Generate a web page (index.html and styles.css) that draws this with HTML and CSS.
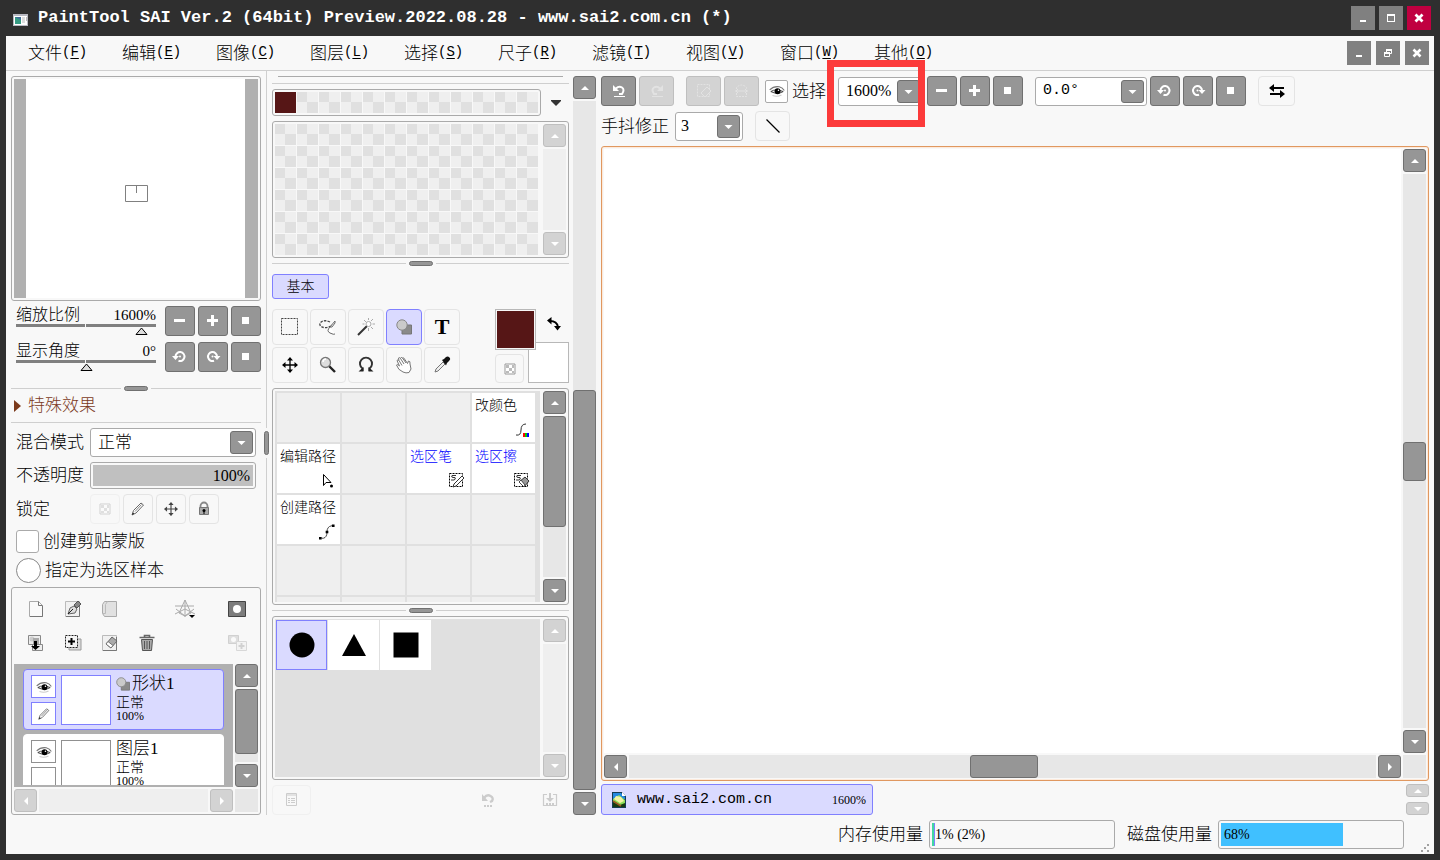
FILE: index.html
```html
<!DOCTYPE html>
<html lang="zh-CN">
<head>
<meta charset="utf-8">
<title>PaintTool SAI Ver.2</title>
<link rel="stylesheet" href="styles.css">
</head>
<body>
<svg class="defs" aria-hidden="true">
  <symbol id="minus" viewBox="0 0 16 16"><path d="M2 6h11v3H2z" fill="#fff"/></symbol>
  <symbol id="plus" viewBox="0 0 16 16"><path d="M2 6h4V2h3v4h4v3H9v4H6V9H2z" fill="#fff"/></symbol>
  <symbol id="stop" viewBox="0 0 16 16"><path d="M4 4h7v7H4z" fill="#fff"/></symbol>
  <symbol id="ccw" viewBox="0 0 16 16"><path d="M3.500 8.500V7.500a4.500 4.500 0 1 1 3 4.300" fill="none" stroke="#fff" stroke-width="2"/><path d="M0 7h7l-3.500 4z" fill="#fff"/><circle cx="8" cy="7.500" r="1" fill="#fff"/></symbol>
  <symbol id="cw" viewBox="0 0 16 16"><path d="M12 8.500V7.500a4.500 4.500 0 1 0-3 4.300" fill="none" stroke="#fff" stroke-width="2"/><path d="M15.500 7h-7L12 11z" fill="#fff"/><circle cx="7.500" cy="7.500" r="1" fill="#fff"/></symbol>
  <symbol id="up" viewBox="0 0 8 4"><path d="M4 0l4 4H0z" fill="#fff"/></symbol>
  <symbol id="down" viewBox="0 0 8 4"><path d="M4 4l4-4H0z" fill="#fff"/></symbol>
  <symbol id="left" viewBox="0 0 4 8"><path d="M0 4l4-4v8z" fill="#fff"/></symbol>
  <symbol id="right" viewBox="0 0 4 8"><path d="M4 4L0 0v8z" fill="#fff"/></symbol>
  <symbol id="eye" viewBox="0 0 16 16"><path d="M1.500 7Q5 3.500 10 4.200 13 5 14.500 7.500" fill="none" stroke="#777"/><path d="M2.500 8.500Q7 5.500 13.500 8.500 8.500 11.500 2.500 8.500z" fill="#eee" stroke="#333" stroke-width=".8"/><circle cx="8.500" cy="8.200" r="2.600" fill="#000"/><circle cx="9.300" cy="7.300" r=".7" fill="#fff"/><path d="M4 12q4 1.500 8-.5" fill="none" stroke="#ccc"/></symbol>
  <symbol id="pencil" viewBox="0 0 16 16"><path d="M2 14l1.500-4.500L11 2l2.500 2L6 12z" fill="#fff" stroke="#666"/><path d="M5 10.500l6.500-7" stroke="#888"/><path d="M2 14l1-2.500 1.300 1.300z" fill="#222"/></symbol>
  <symbol id="move" viewBox="0 0 16 16"><path d="M8 1v14M1 8h14" stroke="currentColor" stroke-width="1.300"/><path d="M8 0l3 3.500H5zM8 16l3-3.500H5zM0 8l3.500-3v6zM16 8l-3.500-3v6z" fill="currentColor"/></symbol>
  <symbol id="checks" viewBox="0 0 16 16"><path d="M3 3h10v10H3z" fill="#fff" stroke="#999"/><path d="M4 4h3v3H4zM10 4h2v3h-2zM7 7h3v3H7zM4 10h3v2H4zM10 10h2v2h-2z" fill="#bbb"/></symbol>
  <symbol id="shapes" viewBox="0 0 16 16"><path d="M6 6h9.500v9H6z" fill="#8a8a8a" stroke="#777"/><circle cx="6" cy="6" r="5.200" fill="#cacaca" stroke="#888"/></symbol>
  <symbol id="page" viewBox="0 0 18 18"><path d="M2.500 1.500h9l4 4v11h-13z" fill="#fafafa" stroke="#aaa"/><path d="M11.500 1.500v4h4M15.500 6v10.500H3" fill="none" stroke="#777"/></symbol>
  <symbol id="pagesq" viewBox="0 0 18 18"><path d="M1.500 1.500h14v15h-14z" fill="#f1f1f1" stroke="#bbb"/><path d="M15.500 3v13.500H2" fill="none" stroke="#777"/></symbol>
</svg>
<div class="app">
  <header class="titlebar">
    <svg class="logo" viewBox="0 0 15 13"><path d="M0 0h15v12H0z" fill="#b9b9c2"/><path d="M1 2h13v9H1z" fill="#fff"/><path d="M2 3h6v7H2z" fill="#369b83"/><path d="M2 3h6v3z" fill="#416c9a"/><path d="M9 4h3M9 6h3M9 8h3M13.500 3v4" stroke="#bbb"/></svg>
    <h1>PaintTool SAI Ver.2 (64bit) Preview.2022.08.28 - www.sai2.com.cn (*)</h1>
    <div class="winbtns">
      <button aria-label="最小化"><svg viewBox="0 0 24 24"><path d="M9 14h6v2H9z" fill="#fff"/></svg></button>
      <button aria-label="最大化"><svg viewBox="0 0 24 24"><path d="M8 8h8v8H8zM9 10v5h6v-5z" fill="#fff" fill-rule="evenodd"/></svg></button>
      <button class="close" aria-label="关闭"><svg viewBox="0 0 24 24"><path d="M8.500 8.500l7 7M15.500 8.500l-7 7" stroke="#fff" stroke-width="2.800"/></svg></button>
    </div>
  </header>
  <div class="window">
    <nav class="menubar">
      <button>文件<span>(<u>F</u>)</span></button>
      <button>编辑<span>(<u>E</u>)</span></button>
      <button>图像<span>(<u>C</u>)</span></button>
      <button>图层<span>(<u>L</u>)</span></button>
      <button>选择<span>(<u>S</u>)</span></button>
      <button>尺子<span>(<u>R</u>)</span></button>
      <button>滤镜<span>(<u>T</u>)</span></button>
      <button>视图<span>(<u>V</u>)</span></button>
      <button>窗口<span>(<u>W</u>)</span></button>
      <button>其他<span>(<u>O</u>)</span></button>
      <div class="winbtns doc">
        <button aria-label="最小化文档"><svg viewBox="0 0 24 24"><path d="M9 14h6v2H9z" fill="#fff"/></svg></button>
        <button aria-label="还原文档"><svg viewBox="0 0 24 24"><path d="M10.500 11V8.500h5v4H13M8.500 11.500h5v4h-5z" fill="none" stroke="#fff"/><path d="M10 8h6v2h-6zM8 11h6v2H8z" fill="#fff"/></svg></button>
        <button aria-label="关闭文档"><svg viewBox="0 0 24 24"><path d="M8.500 8.500l7 7M15.500 8.500l-7 7" stroke="#fff" stroke-width="2.600"/></svg></button>
      </div>
    </nav>
    <main class="work">
      <aside class="left">
        <div class="navigator box"><div class="paper"><svg viewBox="0 0 23 17"><path d="M.5.5h22v16H.5zM11.500 0v8" fill="none" stroke="#808080"/></svg></div></div>
        <div class="navrow">
          <div class="slide"><label for="zoom">缩放比例</label><output>1600%</output><input id="zoom" type="range" value="94"></div>
          <button class="dark sq" aria-label="缩小"><svg class="i16"><use href="#minus"/></svg></button>
          <button class="dark sq" aria-label="放大"><svg class="i16"><use href="#plus"/></svg></button>
          <button class="dark sq" aria-label="重置缩放"><svg class="i16"><use href="#stop"/></svg></button>
        </div>
        <div class="navrow">
          <div class="slide"><label for="angle">显示角度</label><output>0°</output><input id="angle" type="range" value="50"></div>
          <button class="dark sq" aria-label="逆时针旋转"><svg class="i16"><use href="#ccw"/></svg></button>
          <button class="dark sq" aria-label="顺时针旋转"><svg class="i16"><use href="#cw"/></svg></button>
          <button class="dark sq" aria-label="重置角度"><svg class="i16"><use href="#stop"/></svg></button>
        </div>
        <div class="splitter"><i></i></div>
        <button class="effects"><svg viewBox="0 0 7 12"><path d="M0 0l7 6-7 6z" fill="#7b3a1c"/></svg><span>特殊效果</span></button>
        <div class="props">
          <label for="mode">混合模式</label>
          <select id="mode" class="combo"><option>正常</option></select>
          <label for="opacity">不透明度</label>
          <div class="opacity box"><input id="opacity" type="range" value="100"><output>100%</output></div>
          <span class="label">锁定</span>
          <div class="locks">
            <button class="light sq faded" aria-label="锁定透明"><svg class="i16"><use href="#checks"/></svg></button>
            <button class="light sq" aria-label="锁定绘画"><svg class="i16"><use href="#pencil"/></svg></button>
            <button class="light sq grey" aria-label="锁定移动"><svg class="i14"><use href="#move"/></svg></button>
            <button class="light sq" aria-label="锁定全部"><svg class="i16" viewBox="0 0 16 16"><path d="M4.500 7V5a3.500 3.500 0 0 1 7 0v2" fill="none" stroke="#888" stroke-width="1.800"/><path d="M3.500 6.500h9v7h-9z" fill="#aaa" stroke="#777"/><circle cx="8" cy="9.500" r="1.500"/><path d="M7.500 10h1v3h-1z"/></svg></button>
          </div>
        </div>
        <label class="opt"><input type="checkbox"><span>创建剪贴蒙版</span></label>
        <label class="opt round"><input type="radio"><span>指定为选区样本</span></label>
        <section class="layers box">
          <div class="ltools">
            <button aria-label="新建图层"><svg class="i18"><use href="#page"/></svg></button>
            <button aria-label="新建钢笔图层"><svg class="i18" viewBox="0 0 18 18"><use href="#pagesq" width="18" height="18"/><path d="M4 14l2-6 4-2 3 3-2 4z" fill="#ddd" stroke="#666"/><path d="M4 14l5-5" stroke="#222"/><path d="M10 5l4-4 3 3-4 4z" fill="#888" stroke="#555"/></svg></button>
            <button aria-label="新建图层组"><svg class="i18" viewBox="0 0 18 18"><path d="M1.500 4.500l2-3h12v15h-12l-2-3z" fill="#e1e1e1" stroke="#aaa"/><path d="M1.500 13.500h3v-9l2-3" fill="none" stroke="#bbb"/></svg></button>
            <button class="ruler" aria-label="透视尺"><svg class="i20" viewBox="0 0 20 20"><path d="M10 1v17M0 7h19M0 15l10-5 10 5M10 1L4 14l6 3 6-3zM1 10l9 7 9-7" fill="none" stroke="#aaa"/><path d="M14 16h6l-3 3z"/></svg></button>
            <button aria-label="图层蒙版"><svg class="i18" viewBox="0 0 18 18"><path d="M.5 1.500h17v15H.5z" fill="#7d7d7d" stroke="#444"/><circle cx="9" cy="9" r="4" fill="#fff"/></svg></button>
            <button aria-label="向下合并"><svg class="i18" viewBox="0 0 18 18"><path d="M1.500 1.500h12v9h-12zM5.500 10.500h10v6h-10z" fill="#eee" stroke="#888"/><circle cx="5" cy="5" r="2.500" fill="#ccc"/><path d="M6 4h6v6H6z" fill="#aaa"/><path d="M7 7h3v5h3l-4.500 4L4 12h3z"/></svg></button>
            <button aria-label="复制图层"><svg class="i18" viewBox="0 0 18 18"><path d="M5 5h12v11H5z" fill="#ddd" stroke="#999"/><path d="M1.500 1.500h12v12h-12z" fill="#f4f4f4" stroke="#222" stroke-dasharray="2 1"/><path d="M4 6.500h2.500V4h2v2.500H11v2H8.500V11h-2V8.500H4z"/></svg></button>
            <button aria-label="清除图层"><svg class="i18" viewBox="0 0 18 18"><use href="#pagesq" width="18" height="18"/><path d="M5 10l6-7 5 4-6 7z" fill="#aaa" stroke="#666"/><path d="M5 10l2-2.500 5 4-2 2.500z" fill="#fff" stroke="#777"/></svg></button>
            <button aria-label="删除图层"><svg class="i18" viewBox="0 0 18 18"><path d="M3.500 5.500h11l-1 11h-9z" fill="#aaa" stroke="#555"/><path d="M6.500 7v8M9 7v8M11.500 7v8" stroke="#555"/><path d="M1.500 3.500h15M6.500 3V1.500h5V3" fill="none" stroke="#666" stroke-width="1.600"/></svg></button>
            <button class="faded" aria-label="合并蒙版"><svg class="i20" viewBox="0 0 20 20"><path d="M1.500 2.500h10v8h-10z" fill="#bbb" stroke="#999"/><circle cx="6.500" cy="6.500" r="2.500" fill="#fff"/><path d="M9.500 8.500h10v9h-10z" fill="#eee" stroke="#aaa"/><path d="M14.500 10v6M11.500 13h6" stroke="#999" stroke-width="2"/></svg></button>
          </div>
          <div class="lgrid">
            <div class="llist">
              <article class="layer on">
                <div class="lb"><button aria-label="显示形状1"><svg class="i18"><use href="#eye"/></svg></button><button aria-label="编辑形状1"><svg class="i14"><use href="#pencil"/></svg></button></div>
                <div class="thumb"></div>
                <div class="meta"><b><svg class="i14"><use href="#shapes"/></svg>形状1</b><span>正常</span><small>100%</small></div>
              </article>
              <article class="layer">
                <div class="lb"><button aria-label="显示图层1"><svg class="i18"><use href="#eye"/></svg></button><button aria-label="编辑图层1"></button></div>
                <div class="thumb"></div>
                <div class="meta"><b>图层1</b><span>正常</span><small>100%</small></div>
              </article>
            </div>
            <div class="vs"><button class="dark" aria-label="向上"><svg class="av"><use href="#up"/></svg></button><div class="track"><i style="flex-grow:65"></i><s style="flex-grow:8"></s></div><button class="dark" aria-label="向下"><svg class="av"><use href="#down"/></svg></button></div>
            <div class="hs off"><button class="dark" aria-label="向左"><svg class="ah"><use href="#left"/></svg></button><div class="track"></div><button class="dark" aria-label="向右"><svg class="ah"><use href="#right"/></svg></button></div>
            <div class="corner"></div>
          </div>
        </section>
      </aside>
      <div class="vsplit"><i></i></div>
      <section class="mid">
        <div class="cutbox"></div>
        <div class="colorrow"><div class="box hist"><div class="checker"><i></i></div></div><button class="tri" aria-label="颜色历史"><svg viewBox="0 0 10 6"><path d="M0 0h10v1L5 6 0 1z" fill="#333"/></svg></button></div>
        <div class="box swatches"><div class="checker"></div>
          <div class="vs off"><button class="dark" aria-label="向上"><svg class="av"><use href="#up"/></svg></button><div class="track"></div><button class="dark" aria-label="向下"><svg class="av"><use href="#down"/></svg></button></div>
        </div>
        <div class="splitter"><i></i></div>
        <button class="basic">基本</button>
        <div class="toolrow">
          <div class="tools">
            <button class="light" aria-label="选框"><svg class="i20" viewBox="0 0 20 20"><path d="M1.500 1.500h16v16h-16z" fill="none" stroke="#444" stroke-dasharray="2 1"/></svg></button>
            <button class="light" aria-label="套索"><svg class="i20" viewBox="0 0 20 20"><path d="M12 5C6 2 1 5 2 8s8 4 12 0" fill="none" stroke="#444" stroke-dasharray="2.500 1.200" stroke-width="1.300"/><path d="M17 4l-5 6h2l3-4zM12 10q-4 4 0 6t5 1" fill="#fff" stroke="#666"/></svg></button>
            <button class="light" aria-label="魔棒"><svg class="i20" viewBox="0 0 20 20"><path d="M2 18L11 9" stroke="#333" stroke-width="2"/><circle cx="12.500" cy="7" r="2.500" fill="#fff" stroke="#aaa"/><path d="M12.500 1v2M12.500 11v3M6.500 7h2M16.500 7H19M8 3l2 2M15 4l2-2M15 10l2 2" stroke="#aaa"/></svg></button>
            <button class="light on" aria-label="形状"><svg class="i16"><use href="#shapes"/></svg></button>
            <button class="light type" aria-label="文字">T</button>
            <button class="light" aria-label="移动"><svg class="i16"><use href="#move"/></svg></button>
            <button class="light" aria-label="缩放"><svg class="i20" viewBox="0 0 20 20"><path d="M10 10l7 7" stroke="#222" stroke-width="2.400"/><circle cx="7.500" cy="7.500" r="5" fill="#ddd" stroke="#777" stroke-width="1.300"/><path d="M5 7a3 3 0 0 1 3-3" fill="none" stroke="#fff" stroke-width="1.500"/></svg></button>
            <button class="light" aria-label="旋转"><svg class="i20" viewBox="0 0 20 20"><path d="M6.500 16v-2.500a6 6 0 1 1 7 0V16" fill="none" stroke="#333" stroke-width="1.900"/><path d="M2.500 16.500h5V12zM17.500 16.500h-5V12z" fill="#222"/></svg></button>
            <button class="light" aria-label="抓手"><svg class="i20" viewBox="0 0 20 20"><path d="M9 17Q4 15 2.500 10q1-1.500 3 1L3 5.500q1-1.500 2 0L4.500 3q1.500-1 2 .5Q7 1.500 8.500 3q1-1 2 1l3 4.500 1-2.500q2 0 1.500 3l1 5-2 3.500q-3 1-6-.5z" fill="#fff" stroke="#777"/><path d="M5 5.500l3 5M6.500 3.500L10 9M8.500 3L12 8" stroke="#777"/></svg></button>
            <button class="light" aria-label="吸管"><svg class="i20" viewBox="0 0 20 20"><path d="M3 17l1-3 7-7 2 2-7 7z" fill="#eee" stroke="#777"/><path d="M10 5l2-1 2-2q2-1 3.500.5T17 6l-2 2-1 2.500z" fill="#111"/></svg></button>
          </div>
          <div class="colors">
            <button class="c2" aria-label="背景色"></button>
            <button class="c1" aria-label="前景色"></button>
            <button class="swap" aria-label="交换颜色"><svg viewBox="0 0 14 14"><path d="M3 4q7 0 8 6" fill="none" stroke="#000" stroke-width="1.800"/><path d="M0 3.500L4.500 0v7.500zM7 9h7l-3.500 4.500z"/></svg></button>
            <button class="light ctrans" aria-label="透明色"><svg class="i16"><use href="#checks"/></svg></button>
          </div>
        </div>
        <div class="box brushes">
          <div class="bgrid">
            <div></div><div></div><div></div>
            <button>改颜色<svg viewBox="0 0 16 16"><path d="M2 13q5 1 5-5t5-6" fill="none" stroke="#333"/><path d="M9 11h2v4H9z" fill="red"/><path d="M11 11h2v4h-2z" fill="#0c0"/><path d="M13 11h2v4h-2z" fill="#00f"/></svg></button>
            <button>编辑路径<svg viewBox="0 0 16 16"><path d="M4.500 1.500v11l2.500-3h5z" fill="#fff" stroke="#000"/><circle cx="12.500" cy="13" r="1.500"/></svg></button>
            <div></div>
            <button class="sel">选区笔<svg viewBox="0 0 16 16"><path d="M.5.5h13v13H.5z" fill="none" stroke="#000" stroke-dasharray="2 1"/><path d="M7 2.500H3q-1 2 1 2h2q1 2-1 2.500H2" fill="none" stroke="#333"/><path d="M4 14l1-3 8-8 2 2-8 8z" fill="#fff" stroke="#333"/></svg></button>
            <button class="sel">选区擦<svg viewBox="0 0 16 16"><path d="M.5.5h13v13H.5z" fill="none" stroke="#000" stroke-dasharray="2 1"/><path d="M7 2.500H3q-1 2 1 2h2q1 2-1 2.500H2" fill="none" stroke="#333"/><path d="M5 9l6-5 4 4-5 6z" fill="#999" stroke="#333"/><path d="M5 9l2-2 4 5-1 2z" fill="#fff" stroke="#444"/></svg></button>
            <button>创建路径<svg viewBox="0 0 18 18"><path d="M3 16h2q4-1 4-7t5-7h2" fill="none" stroke="#333"/><path d="M0 14.500h3v3H0zM7.500 7.500h3v3h-3zM14.500.5h3v3h-3z"/></svg></button>
            <div></div><div></div><div></div><div></div><div></div><div></div><div></div><div></div><div></div><div></div><div></div>
          </div>
          <div class="vs"><button class="dark" aria-label="向上"><svg class="av"><use href="#up"/></svg></button><div class="track"><i style="flex-grow:110"></i><s style="flex-grow:51"></s></div><button class="dark" aria-label="向下"><svg class="av"><use href="#down"/></svg></button></div>
        </div>
        <div class="splitter"><i></i></div>
        <div class="box shapes">
          <div class="sgrid">
            <button class="on" aria-label="圆形"><svg viewBox="0 0 26 26"><circle cx="13" cy="13" r="12.500"/></svg></button>
            <button aria-label="三角形"><svg viewBox="0 0 26 26"><path d="M13 2l12 22H1z"/></svg></button>
            <button aria-label="矩形"><svg viewBox="0 0 26 26"><path d="M.5.500h25v25H.5z"/></svg></button>
          </div>
          <div class="vs off"><button class="dark" aria-label="向上"><svg class="av"><use href="#up"/></svg></button><div class="track"></div><button class="dark" aria-label="向下"><svg class="av"><use href="#down"/></svg></button></div>
        </div>
        <div class="foot">
          <button class="light" aria-label="设置"><svg class="i16" viewBox="0 0 16 16"><path d="M2.500 1.500h10v12h-10z" fill="none" stroke="#ccc"/><path d="M3 3h10M4 6.500h2M7 6.500h4M4 8.500h2M7 8.500h4M4 10.500h2M7 10.500h4" stroke="#ccc"/></svg></button>
          <span></span>
          <button aria-label="还原"><svg class="i16" viewBox="0 0 16 16"><path d="M4 6q3-4 6.500-2T12 9l-2 1" fill="none" stroke="#ccc" stroke-width="2.400"/><path d="M2 2v7h6z" fill="#ccc"/><path d="M4 13h2v2H4zM7 13h2v2H7zM10 13h2v2h-2z" fill="#ccc"/></svg></button>
          <button aria-label="保存"><svg class="i16" viewBox="0 0 16 16"><path d="M5 2.500H1.500v11h13v-11H11" fill="none" stroke="#ccc" stroke-width="1.200"/><path d="M7 1h2v5h3l-4 4-4-4h3zM4 11h2v2H4zM7 11h2v2H7zM10 11h2v2h-2z" fill="#ccc"/></svg></button>
        </div>
      </section>
      <div class="vs main"><button class="dark" aria-label="向上"><svg class="av"><use href="#up"/></svg></button><div class="track"><s style="flex-grow:290"></s><i style="flex-grow:399"></i></div><button class="dark" aria-label="向下"><svg class="av"><use href="#down"/></svg></button></div>
      <section class="right">
        <div class="bar">
          <button class="dark wd" aria-label="撤销"><svg class="i16" viewBox="0 0 16 16"><path d="M5 5.500q3-3 6-1t0 6.500H8" fill="none" stroke="#fff" stroke-width="2"/><path d="M2 2v6h6z" fill="#fff"/><path d="M3 13.500h11" stroke="#fff"/></svg></button>
          <button class="dark wd off" aria-label="重做"><svg class="i16" viewBox="0 0 16 16"><path d="M11 5.500q-3-3-6-1t0 6.500h3" fill="none" stroke="#fff" stroke-width="2"/><path d="M14 2v6H8z" fill="#fff"/><path d="M3 13.500h11" stroke="#fff"/></svg></button>
          <button class="dark wd off gap" aria-label="取消选区"><svg class="i16" viewBox="0 0 16 16"><path d="M1.500 1.500h12v12h-12z" fill="none" stroke="#fff" stroke-dasharray="2 1"/><path d="M5 10l6-6 4 4-6 6z" fill="#d3d3d3" stroke="#fff"/></svg></button>
          <button class="dark wd off" aria-label="反选"><svg class="i16" viewBox="0 0 16 16"><path d="M2.500 6V4.500q5-5 10 0V6M2.500 10v3.500h10V10" fill="none" stroke="#fff" stroke-dasharray="2 1"/><path d="M1 8h13M4 6L2 8l2 2M11 6l2 2-2 2" fill="none" stroke="#fff"/></svg></button>
          <button class="eyebtn" aria-label="显示选区"><svg class="i18"><use href="#eye"/></svg></button>
          <span class="seltext">选择</span>
          <div class="zoomwrap"><select class="combo num" aria-label="缩放"><option>1600%</option></select><div class="mark"></div></div>
          <button class="dark sq" aria-label="缩小"><svg class="i16"><use href="#minus"/></svg></button>
          <button class="dark sq" aria-label="放大"><svg class="i16"><use href="#plus"/></svg></button>
          <button class="dark sq" aria-label="重置缩放"><svg class="i16"><use href="#stop"/></svg></button>
          <select class="combo mono rot gap" aria-label="角度"><option>0.0°</option></select>
          <button class="dark sq" aria-label="逆时针旋转"><svg class="i16"><use href="#ccw"/></svg></button>
          <button class="dark sq" aria-label="顺时针旋转"><svg class="i16"><use href="#cw"/></svg></button>
          <button class="dark sq" aria-label="重置角度"><svg class="i16"><use href="#stop"/></svg></button>
          <button class="light flip gap" aria-label="水平翻转"><svg class="i16" viewBox="0 0 16 16"><path d="M4 5h11M1 11h11" stroke="#000" stroke-width="2"/><path d="M0 5l5-4v8zM16 11l-5-4v8z"/></svg></button>
        </div>
        <div class="bar second">
          <label for="stab">手抖修正</label>
          <select id="stab" class="combo num stab"><option>3</option></select>
          <button class="light wd gap" aria-label="直线"><svg class="i16" viewBox="0 0 16 16"><path d="M1.500 1.500l13 13" stroke="#000" stroke-width="1.300"/></svg></button>
        </div>
        <div class="canvas">
          <div class="sheet"></div>
          <div class="vs"><button class="dark" aria-label="向上"><svg class="av"><use href="#up"/></svg></button><div class="track"><s style="flex-grow:268"></s><i style="flex-grow:38"></i><s style="flex-grow:247"></s></div><button class="dark" aria-label="向下"><svg class="av"><use href="#down"/></svg></button></div>
          <div class="hs"><button class="dark" aria-label="向左"><svg class="ah"><use href="#left"/></svg></button><div class="track"><s style="flex-grow:342"></s><i style="flex-grow:66"></i><s style="flex-grow:339"></s></div><button class="dark" aria-label="向右"><svg class="ah"><use href="#right"/></svg></button></div>
          <div class="corner"></div>
        </div>
        <div class="docs">
          <button class="doc-tab"><svg viewBox="0 0 16 16"><path d="M1 0h10l4 4v12H1z" fill="#153c53"/><path d="M2 1h8l4 4v2H2z" fill="#2689e0"/><path d="M2 7l6-4 6 5v4L9 14l-7-4z" fill="#8de05a"/><path d="M5 4l5 1 3 4-4 2-6-4z" fill="#f4f3a5"/><path d="M2 10l7 3 5-2v4H2z" fill="#173b13"/><path d="M2 9l8 5" stroke="#9c5a23" stroke-width="1.500"/><path d="M11 0v4h4z" fill="#fff"/></svg><span>www.sai2.com.cn</span><small>1600%</small></button>
          <div class="spin"><button class="dark" aria-label="上一行"><svg class="av"><use href="#up"/></svg></button><button class="dark" aria-label="下一行"><svg class="av"><use href="#down"/></svg></button></div>
        </div>
      </section>
    </main>
    <footer class="status">
      <span class="cap">内存使用量</span><div class="box meter mem"><i style="width:2px"></i><span>1% (2%)</span></div>
      <span class="cap">磁盘使用量</span><div class="box meter disk"><i style="width:68%"></i><span>68%</span></div>
      <svg class="grip" viewBox="0 0 9 9"><path d="M6 0h2v2H6zM3 3h2v2H3zM0 6h2v2H0zM6 6h2v2H6z" fill="#a0a0a0"/></svg>
    </footer>
  </div>
</div>
</body>
</html>
```
FILE: styles.css
```css
* { box-sizing: border-box; }
body {
  margin: 0;
  font: 300 17px/20px "Noto Sans CJK SC", sans-serif;
  color: #000;
}
button {
  margin: 0; padding: 0; border: 0; background: none;
  font: inherit; color: inherit;
  display: flex; align-items: center; justify-content: center; flex: none;
}
svg { display: block; flex: none; }
.defs { display: none; }
.i14 { width: 14px; height: 14px; }
.i16 { width: 16px; height: 16px; }
.i18 { width: 18px; height: 18px; }
.i20 { width: 20px; height: 20px; }
.av { width: 8px; height: 4px; }
.ah { width: 4px; height: 8px; }

.app {
  height: 100vh; min-height: 700px;
  display: flex; flex-direction: column;
  background: #2f2f2f; padding: 0 6px 6px;
}
.titlebar { display: flex; align-items: center; height: 36px; padding: 0 3px 0 7px; flex: none; }
.logo { width: 15px; height: 13px; margin-top: 4px; }
h1 { margin: 0 auto 0 10px; font: bold 17px/20px "Liberation Mono", monospace; color: #fff; white-space: nowrap; }
.winbtns { display: flex; gap: 4px; }
.winbtns button { width: 24px; height: 24px; background: #808080; }
.winbtns svg { width: 24px; height: 24px; }
.winbtns .close { background: #c00040; }
.winbtns.doc { gap: 5px; margin-left: auto; }

.window { flex: 1; min-height: 0; display: flex; flex-direction: column; background: #f8f8f8; }
.menubar { display: flex; align-items: center; height: 35px; padding: 0 5px 0 22px; border-bottom: 1px solid #cfcfcf; flex: none; }
.menubar > button { width: 94px; justify-content: flex-start; padding-bottom: 2px; }
.menubar span { font: 14px/20px "Liberation Mono", monospace; }
u { text-underline-offset: 2px; }

.work { flex: 1; min-height: 0; display: flex; }
.box { border: 1px solid #aaa; border-radius: 3px; padding: 2px; background: #f8f8f8; }
.dark { background: #969696; border: 1px solid #707070; border-radius: 3px; }
.dark.off, .off .dark, .spin .dark { background: #d3d3d3; border-color: #bfbfbf; }
.dark.off svg { opacity: .35; }
.light { border: 1px solid #e4e4e4; border-radius: 4px; }
.light.on, .basic { background: #dadaff; border: 1px solid #8080ff; }
.sq { width: 30px; height: 30px; }
.wd { width: 35px; height: 30px; }
.faded { opacity: .4; }
.grey { color: #444; }

.splitter { display: flex; align-items: center; gap: 3px; height: 5px; flex: none; }
.splitter::before, .splitter::after { content: ""; flex: 1; height: 1px; background: #cfcfcf; }
.splitter i, .vsplit i { width: 24px; height: 5px; border: 1px solid #707070; border-radius: 3px; background: #969696; }
.vsplit { display: flex; flex-direction: column; align-items: center; width: 5px; gap: 3px; flex: none; }
.vsplit::before, .vsplit::after { content: ""; width: 1px; flex: 360 0 0; background: #cfcfcf; }
.vsplit i { width: 5px; height: 24px; }

.vs { display: flex; flex-direction: column; gap: 2px; width: 23px; flex: none; }
.vs .dark { width: 23px; height: 23px; }
.hs { display: flex; gap: 2px; height: 23px; }
.hs .dark { width: 23px; height: 23px; }
.track { flex: 1; min-height: 0; display: flex; flex-direction: inherit; background: #e7e7e7; }
.off .track { background: #efefef; }
.track i { flex: 1 1 0; background: #969696; border: 1px solid #707070; border-radius: 3px; }
.track s { flex: 1 1 0; }
.corner { background: #e7e7e7; }

.left { width: 258px; padding: 5px 3px 0 5px; display: flex; flex-direction: column; flex: none; }
.navigator { height: 225px; flex: none; display: flex; margin-bottom: 5px; }
.paper { flex: 1; border: solid #b0b0b0; border-width: 0 13px 0 12px; background: #fff; display: flex; align-items: center; justify-content: center; padding: 10px 0 0 2px; }
.paper svg { width: 23px; height: 17px; }
.navrow { display: flex; gap: 3px; margin-bottom: 6px; padding-left: 5px; }
.slide { flex: 1; display: grid; grid-template-columns: 1fr auto; margin-right: 6px; height: 30px; grid-template-rows: 18px 12px; }
.slide label { font-size: 16px; line-height: 14px; }
.slide output { font: 15px/18px "Liberation Serif", serif; }
input[type=range] { appearance: none; margin: 0; background: none; min-width: 0; }
.slide input { grid-column: 1 / 3; height: 12px; width: 100%; }
.slide input::-webkit-slider-runnable-track { height: 12px; background: linear-gradient(#808080, #808080) 0 0 / calc(50% - 1px) 3px no-repeat, linear-gradient(#808080, #808080) 100% 0 / 50% 3px no-repeat; }
.slide input::-webkit-slider-thumb { appearance: none; width: 13px; height: 8px; margin-top: 3px; background: url("data:image/svg+xml,%3Csvg xmlns='http://www.w3.org/2000/svg' viewBox='0 0 13 8'%3E%3Cpath d='M1 7.5L6.500 1l5.500 6.500z' fill='%23ddd' stroke='%23000'/%3E%3C/svg%3E") no-repeat; }
.left > .splitter { margin: 8px 0 3px; }
.effects { justify-content: flex-start; gap: 7px; height: 28px; padding: 0 0 5px 3px; color: #7b3a1c; }
.effects svg { width: 7px; height: 12px; }
.effects span, .props label, .label, .opt span, .seltext, .second label, .cap { padding-bottom: 3px; }
.props { display: grid; grid-template-columns: 74px 1fr; gap: 5px 0; align-items: center; border-top: 1px solid #cfcfcf; padding: 5px 5px 0; margin-bottom: 5px; }
.combo {
  appearance: none; height: 29px; min-width: 0; margin: 0; padding: 0 28px 3px 7px;
  border: 1px solid #aaa; border-radius: 3px; font: inherit; color: #000; outline: 0;
  background: #fff url("data:image/svg+xml,%3Csvg xmlns='http://www.w3.org/2000/svg' width='23' height='23'%3E%3Crect x='.5' y='.5' width='22' height='22' rx='2.500' fill='%23969696' stroke='%23707070'/%3E%3Cpath d='M7.500 10h8l-4 4z' fill='%23fff'/%3E%3C/svg%3E") right 2px center no-repeat;
}
.mono { font-family: "Liberation Mono", monospace; font-size: 15px; padding-bottom: 0; }
.num { font-family: "Liberation Serif", serif; font-size: 16px; padding-bottom: 0; }
.opacity { display: flex; height: 27px; position: relative; }
.opacity input { width: 100%; height: 21px; background: #c0c0c0; }
.opacity input::-webkit-slider-thumb { appearance: none; width: 1px; height: 21px; }
.opacity output { position: absolute; right: 5px; top: 3px; font: 16px/20px "Liberation Serif", serif; }
.locks { display: flex; gap: 3px; }
.opt { display: flex; align-items: center; gap: 4px; height: 24px; padding-left: 5px; margin-bottom: 4px; }
.opt input { appearance: none; width: 23px; height: 23px; margin: 0; border: 1px solid #aaa; border-radius: 3px; background: #fff; }
.opt.round { height: 26px; }
.opt.round input { width: 25px; height: 25px; border-radius: 50%; border-color: #888; }

.layers { flex: 1; min-height: 0; display: flex; flex-direction: column; }
.ltools { display: grid; grid-template-columns: 37px 37px 37px 1fr 34px; height: 74px; padding: 2px 4px 4px 5px; flex: none; }
.ltools button { width: 34px; height: 34px; }
.ltools .ruler { justify-self: end; margin-right: 18px; }
.lgrid { flex: 1; min-height: 0; display: grid; grid-template: minmax(0, 1fr) 23px / minmax(0, 1fr) 23px; gap: 2px; }
.llist { background: #b0b0b0; padding: 5px 9px 0; overflow: hidden; border-bottom: 2px solid #b0b0b0; }
.layer { display: flex; gap: 5px; height: 61px; padding: 5px 7px; background: #fff; border: 1px solid #fff; border-radius: 4px; margin-bottom: 4px; }
.layer.on { background: #dadaff; border-color: #8080ff; }
.lb { display: flex; flex-direction: column; gap: 4px; }
.lb button { width: 25px; height: 23px; background: #fff; border: 1px solid #909090; }
.thumb { width: 50px; height: 50px; background: #fff; border: 1px solid #909090; }
.on .lb button, .on .thumb { border-color: #8080ff; }
.meta { display: flex; flex-direction: column; font-size: 14px; line-height: 16px; white-space: nowrap; }
.meta b { display: flex; align-items: center; gap: 2px; font: 300 17px/18px "Liberation Serif", "Noto Sans CJK SC", serif; }
.meta small { font: 12px/14px "Liberation Serif", serif; }

.mid { width: 302px; padding: 5px 2px 0 3px; display: flex; flex-direction: column; flex: none; }
.cutbox { height: 8px; border-bottom: 1px solid #cfcfcf; flex: none; }
.cutbox::before { content: ""; display: block; height: 1px; margin: 0 6px; background: #aaa; }
.colorrow { display: flex; margin-top: 5px; }
.hist { width: 269px; height: 27px; }
.checker {
  background-size: 22px 22px;
  background-image:
    linear-gradient(90deg, transparent 21px, #f8f8f8 21px),
    linear-gradient(transparent 21px, #f8f8f8 21px),
    conic-gradient(from 0deg at 10px 10px, #efefef 25%, #e0e0e0 25% 50%, #efefef 50% 75%, #e0e0e0 75%);
}
.hist .checker { height: 21px; width: 263px; }
.hist i { display: block; width: 21px; height: 21px; background: #561616; }
.tri { width: 29px; }
.tri svg { width: 10px; height: 6px; }
.swatches { display: flex; height: 137px; margin: 5px 0 3px; flex: none; }
.swatches .checker { width: 264px; }
.swatches .vs { margin-left: auto; }
.basic { width: 57px; height: 25px; margin: 8px 0 10px; padding-bottom: 3px; font-size: 14px; border-radius: 3px; }
.toolrow { display: flex; justify-content: space-between; margin-bottom: 5px; }
.tools { display: grid; grid-template-columns: repeat(5, 36px); grid-auto-rows: 36px; gap: 2px; }
.type { font: bold 22px/24px "Liberation Serif", serif; }
.colors { position: relative; width: 74px; height: 74px; }
.c1, .c2 { position: absolute; width: 41px; height: 41px; border: 1px solid #b8b8b8; }
.c1 { left: 0; top: 0; background: #561616; box-shadow: inset 0 0 0 1px #f8f8f8; }
.c2 { right: 0; bottom: 0; background: #fff; }
.swap { position: absolute; right: 8px; top: 8px; }
.swap svg { width: 14px; height: 14px; }
.ctrans { position: absolute; left: 0; bottom: 0; width: 29px; height: 29px; }
.brushes { display: flex; height: 217px; flex: none; justify-content: space-between; }
.bgrid { width: 265px; padding: 2px 5px 0 2px; background: #e0e0e0; display: grid; grid-template-columns: repeat(4, 1fr); grid-auto-rows: 49px; gap: 2px; overflow: hidden; }
.bgrid > * { background: #efefef; min-width: 0; }
.bgrid button { flex-direction: column; align-items: flex-start; justify-content: space-between; background: #fff; font-size: 14px; line-height: 16px; padding: 3px 5px 4px 3px; white-space: nowrap; }
.bgrid svg { width: 16px; height: 16px; align-self: flex-end; }
.bgrid .sel { color: #00f; }
.mid > .brushes + .splitter { margin: 3px 0; }
.shapes { flex: 1; min-height: 0; display: flex; justify-content: space-between; }
.sgrid { width: 265px; background: #e0e0e0; padding: 1px; display: flex; gap: 1px; }
.sgrid button { width: 51px; height: 50px; background: #fff; }
.sgrid .on { background: #dadaff; border: 1px solid #8080ff; }
.sgrid svg { width: 26px; height: 26px; }
.foot { display: flex; height: 30px; margin-top: 5px; gap: 46px; padding-right: 11px; flex: none; }
.foot span { flex: 1; }
.foot .light { width: 39px; border-color: #f0f0f0; }
.vs.main { padding-top: 5px; margin: 0 5px 0 2px; }

.right { flex: 1; min-width: 0; display: flex; flex-direction: column; padding: 5px 5px 0 0; }
.bar { display: flex; align-items: center; gap: 3px; height: 30px; flex: none; }
.bar .gap { margin-left: 9px; }
.eyebtn { width: 23px; height: 23px; border: 1px solid #aaa; border-radius: 2px; background: #fff; margin-left: 3px; }
.seltext { margin-left: 1px; }
.zoomwrap { position: relative; width: 83px; margin: 0 3px 0 9px; display: flex; }
.zoomwrap select { width: 100%; background-position-x: right; }
.mark { position: absolute; left: -11px; right: -4px; top: -17px; height: 67px; border: 7px solid #fc3a3a; pointer-events: none; }
.rot { width: 112px; }
.flip { width: 37px; height: 30px; }
.second { margin: 5px 0; }
.stab { width: 68px; margin-left: 3px; padding-left: 5px; }
.canvas { flex: 1; min-height: 0; border: 1px solid #e09860; border-radius: 3px; box-shadow: inset 0 0 0 1px #fdeadb; padding: 2px; display: grid; grid-template: minmax(0, 1fr) 23px / minmax(0, 1fr) 23px; gap: 2px; }
.sheet { background: #fff; }
.docs { display: flex; justify-content: space-between; margin-top: 3px; flex: none; }
.doc-tab { width: 272px; height: 31px; background: #dadaff; border: 1px solid #8080ff; border-radius: 3px; padding: 0 6px 0 9px; gap: 10px; font: 15px/20px "Liberation Mono", monospace; }
.doc-tab svg { width: 16px; height: 16px; }
.doc-tab small { margin-left: auto; font: 12px/20px "Liberation Serif", serif; }
.spin { display: flex; flex-direction: column; justify-content: space-between; }
.spin .dark { width: 23px; height: 13px; }

.status { height: 39px; display: flex; align-items: center; justify-content: flex-end; padding: 0 4px 1px 0; flex: none; }
.meter { width: 186px; height: 29px; margin: 0 12px 0 6px; display: flex; position: relative; }
.meter i { background: #40c0ff; }
.mem i { background: #40d8a0; border-right: 1px solid #8080ff; box-sizing: content-box; }
.meter span { position: absolute; left: 5px; top: 4px; font: 14px/20px "Liberation Serif", serif; }
.disk { margin-right: 17px; }
.grip { width: 9px; height: 9px; align-self: flex-end; }
```
